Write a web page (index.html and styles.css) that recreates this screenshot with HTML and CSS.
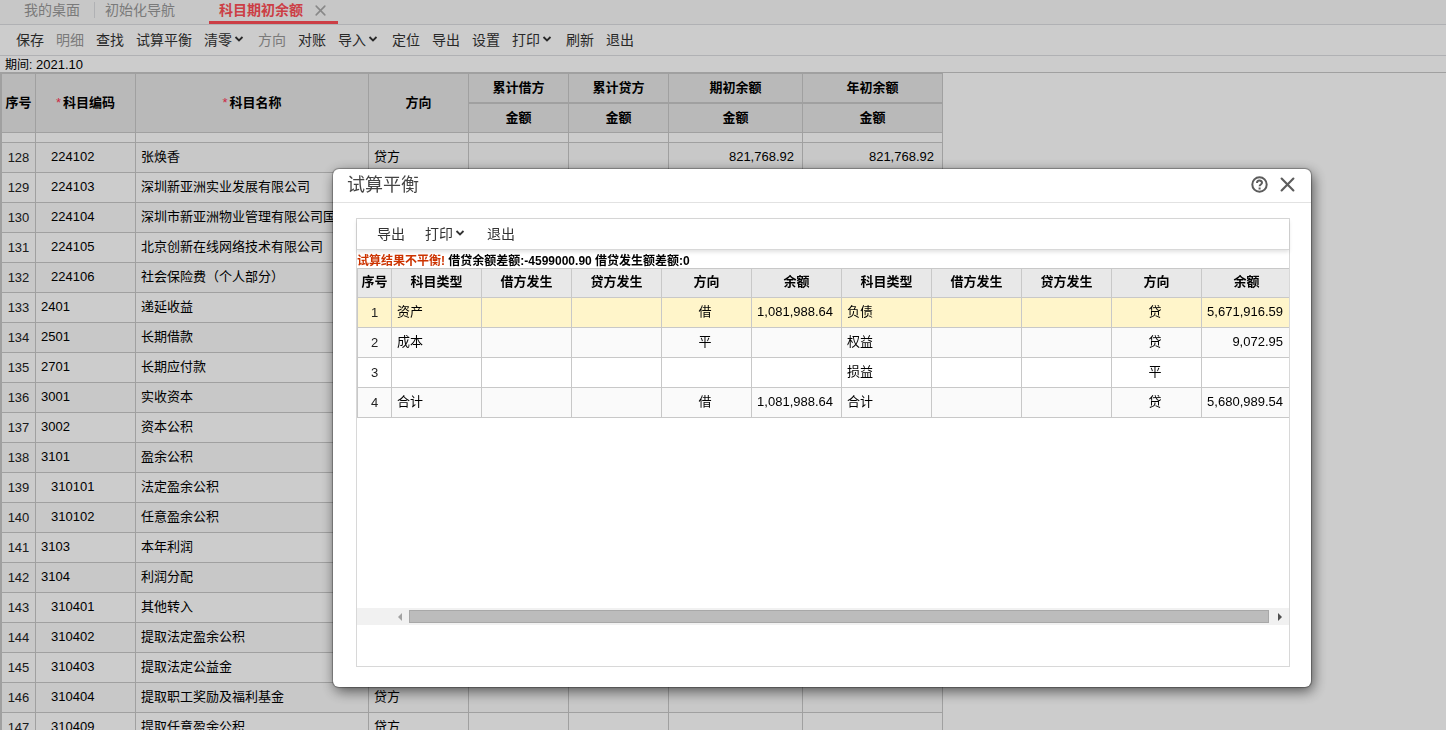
FILE: index.html
```html
<!DOCTYPE html>
<html lang="zh-CN">
<head>
    <meta charset="UTF-8">
    <meta name="viewport" content="width=device-width, initial-scale=1.0">
    <title>科目期初余额</title>
    <link rel="stylesheet" href="styles.css">
</head>
<body>

    <svg class="symbols" aria-hidden="true">
        <symbol id="chevron" viewBox="0 0 10 8"><path d="M1.5 2l3.5 3.5L8.5 2" fill="none" stroke="currentColor" stroke-width="1.8"/></symbol>
        <symbol id="cross" viewBox="0 0 14 14"><path d="M1.5 1.5l11 11M12.5 1.5l-11 11" fill="none" stroke="currentColor" stroke-linecap="round"/></symbol>
    </svg>

    <div class="page">
        <!-- 页签 -->
        <nav class="tabs">
            <a class="tab tab-home" href="#">我的桌面</a>
            <a class="tab tab-nav" href="#">初始化导航</a>
            <div class="tab active">
                <a href="#">科目期初余额</a>
                <button class="tab-close" aria-label="关闭页签"><svg><use href="#cross"/></svg></button>
            </div>
        </nav>

        <!-- 工具栏 -->
        <div class="toolbar">
            <button>保存</button>
            <button class="muted">明细</button>
            <button>查找</button>
            <button>试算平衡</button>
            <button>清零<svg class="chevron"><use href="#chevron"/></svg></button>
            <button class="muted">方向</button>
            <button>对账</button>
            <button>导入<svg class="chevron"><use href="#chevron"/></svg></button>
            <button>定位</button>
            <button>导出</button>
            <button>设置</button>
            <button>打印<svg class="chevron"><use href="#chevron"/></svg></button>
            <button>刷新</button>
            <button>退出</button>
        </div>

        <div class="period"><span>期间:</span> 2021.10</div>

        <div class="grid-area">
            <table class="grid main-grid">
                <colgroup>
                    <col class="c-no"><col class="c-code"><col class="c-name"><col class="c-dir">
                    <col class="c-sum"><col class="c-sum"><col class="c-begin"><col class="c-year">
                </colgroup>
                <thead>
                    <tr class="head-top">
                        <th rowspan="2">序号</th>
                        <th rowspan="2"><i>*</i>科目编码</th>
                        <th rowspan="2"><i>*</i>科目名称</th>
                        <th rowspan="2">方向</th>
                        <th class="group">累计借方</th>
                        <th class="group">累计贷方</th>
                        <th class="group">期初余额</th>
                        <th class="group">年初余额</th>
                    </tr>
                    <tr class="head-sub"><th>金额</th><th>金额</th><th>金额</th><th>金额</th></tr>
                </thead>
                <tbody>
                    <tr class="partial"><td></td><td></td><td></td><td></td><td></td><td></td><td></td><td></td></tr>
                    <tr><td>128</td><td class="sub">224102</td><td>张焕香</td><td>贷方</td><td></td><td></td><td class="num">821,768.92</td><td class="num">821,768.92</td></tr>
                    <tr><td>129</td><td class="sub">224103</td><td>深圳新亚洲实业发展有限公司</td><td></td><td></td><td></td><td></td><td></td></tr>
                    <tr><td>130</td><td class="sub">224104</td><td>深圳市新亚洲物业管理有限公司国</td><td></td><td></td><td></td><td></td><td></td></tr>
                    <tr><td>131</td><td class="sub">224105</td><td>北京创新在线网络技术有限公司</td><td></td><td></td><td></td><td></td><td></td></tr>
                    <tr><td>132</td><td class="sub">224106</td><td>社会保险费（个人部分）</td><td></td><td></td><td></td><td></td><td></td></tr>
                    <tr><td>133</td><td>2401</td><td>递延收益</td><td></td><td></td><td></td><td></td><td></td></tr>
                    <tr><td>134</td><td>2501</td><td>长期借款</td><td></td><td></td><td></td><td></td><td></td></tr>
                    <tr><td>135</td><td>2701</td><td>长期应付款</td><td></td><td></td><td></td><td></td><td></td></tr>
                    <tr><td>136</td><td>3001</td><td>实收资本</td><td></td><td></td><td></td><td></td><td></td></tr>
                    <tr><td>137</td><td>3002</td><td>资本公积</td><td></td><td></td><td></td><td></td><td></td></tr>
                    <tr><td>138</td><td>3101</td><td>盈余公积</td><td></td><td></td><td></td><td></td><td></td></tr>
                    <tr><td>139</td><td class="sub">310101</td><td>法定盈余公积</td><td></td><td></td><td></td><td></td><td></td></tr>
                    <tr><td>140</td><td class="sub">310102</td><td>任意盈余公积</td><td></td><td></td><td></td><td></td><td></td></tr>
                    <tr><td>141</td><td>3103</td><td>本年利润</td><td></td><td></td><td></td><td></td><td></td></tr>
                    <tr><td>142</td><td>3104</td><td>利润分配</td><td></td><td></td><td></td><td></td><td></td></tr>
                    <tr><td>143</td><td class="sub">310401</td><td>其他转入</td><td></td><td></td><td></td><td></td><td></td></tr>
                    <tr><td>144</td><td class="sub">310402</td><td>提取法定盈余公积</td><td></td><td></td><td></td><td></td><td></td></tr>
                    <tr><td>145</td><td class="sub">310403</td><td>提取法定公益金</td><td></td><td></td><td></td><td></td><td></td></tr>
                    <tr><td>146</td><td class="sub">310404</td><td>提取职工奖励及福利基金</td><td>贷方</td><td></td><td></td><td></td><td></td></tr>
                    <tr><td>147</td><td class="sub">310409</td><td>提取任意盈余公积</td><td>贷方</td><td></td><td></td><td></td><td></td></tr>
                </tbody>
            </table>
        </div>
    </div>

    <!-- 试算平衡弹窗 -->
    <div class="overlay">
        <div class="modal" role="dialog" aria-labelledby="modal-title">
            <div class="modal-header">
                <h2 id="modal-title">试算平衡</h2>
                <button class="icon-btn" aria-label="帮助">
                    <svg width="17" height="17" viewBox="0 0 17 17" fill="none" stroke="currentColor" stroke-width="2">
                        <circle cx="8.5" cy="8.5" r="7.2"/>
                        <path d="M6 7c0-3.2 5-3.2 5-.2 0 1.7-2.4 1.7-2.4 3.5M8.6 11.4v2"/>
                    </svg>
                </button>
                <button class="icon-btn modal-close" aria-label="关闭"><svg><use href="#cross"/></svg></button>
            </div>
            <div class="modal-box">
                <div class="toolbar modal-toolbar">
                    <button>导出</button>
                    <button>打印<svg class="chevron"><use href="#chevron"/></svg></button>
                    <button>退出</button>
                </div>
                <p class="result"><span>试算结果不平衡!</span> 借贷余额差额:-4599000.90 借贷发生额差额:0</p>
                <div class="balance-area">
                    <table class="grid balance-grid">
                        <thead>
                            <tr>
                                <th class="c-no">序号</th>
                                <th>科目类型</th><th>借方发生</th><th>贷方发生</th><th>方向</th><th>余额</th>
                                <th>科目类型</th><th>借方发生</th><th>贷方发生</th><th>方向</th><th>余额</th>
                            </tr>
                        </thead>
                        <tbody>
                            <tr class="selected"><td>1</td><td>资产</td><td></td><td></td><td class="mid">借</td><td class="num">1,081,988.64</td><td>负债</td><td></td><td></td><td class="mid">贷</td><td class="num">5,671,916.59</td></tr>
                            <tr><td>2</td><td>成本</td><td></td><td></td><td class="mid">平</td><td></td><td>权益</td><td></td><td></td><td class="mid">贷</td><td class="num">9,072.95</td></tr>
                            <tr><td>3</td><td></td><td></td><td></td><td></td><td></td><td>损益</td><td></td><td></td><td class="mid">平</td><td></td></tr>
                            <tr><td>4</td><td>合计</td><td></td><td></td><td class="mid">借</td><td class="num">1,081,988.64</td><td>合计</td><td></td><td></td><td class="mid">贷</td><td class="num">5,680,989.54</td></tr>
                        </tbody>
                    </table>
                </div>
                <div class="scrollbar">
                    <span class="arrow arrow-left"></span>
                    <span class="thumb"></span>
                    <span class="arrow arrow-right"></span>
                </div>
            </div>
        </div>
    </div>

</body>
</html>
```
FILE: styles.css
```css
* {
    box-sizing: border-box;
}
body {
    margin: 0;
    font-family: "Liberation Sans", "Noto Sans CJK SC", sans-serif;
    font-size: 13px;
    color: #000;
    background-color: #fff;
}
button {
    display: flex;
    align-items: center;
    padding: 0;
    border: none;
    background: none;
    font: inherit;
    color: inherit;
    cursor: pointer;
}
a {
    color: inherit;
    text-decoration: none;
}
.symbols {
    position: absolute;
    width: 0;
    height: 0;
}
.page {
    display: flex;
    flex-direction: column;
    height: 100vh;
    overflow: hidden;
}

/* 页签 */
.tabs {
    display: flex;
    flex: none;
    height: 25px;
    background-color: #f9f9f9;
    border-bottom: 1px solid #dcdee2;
    font-size: 14px;
    line-height: 20px;
    color: #999;
}
.tab-home {
    padding: 0 14px 0 24px;
}
.tab-nav {
    padding: 0 34px 0 10px;
    margin: 2px 0 6px;
    border-left: 1px solid #dcdee2;
    line-height: 16px;
}
.tab.active {
    display: flex;
    gap: 12px;
    height: 24px;
    padding: 0 12px 0 10px;
    border-bottom: 3px solid #ff4e57;
    color: #ff4e57;
    font-weight: bold;
}
.tab-close {
    height: 21px;
    color: #aaa;
}
.tab-close svg {
    width: 11px;
    height: 11px;
    stroke-width: 2;
}

/* 工具栏 */
.toolbar {
    display: flex;
    flex: none;
    gap: 12px;
    height: 31px;
    padding: 0 16px 2px;
    border-bottom: 1px solid #dcdee2;
    font-size: 14px;
    color: #333;
}
.toolbar .muted {
    color: #999;
}
.chevron {
    width: 10px;
    height: 8px;
    margin: 0 2px;
}
.period {
    flex: none;
    height: 16px;
    padding-left: 5px;
    line-height: 18px;
}
.period span {
    font-size: 12px;
}

/* 表格 */
.grid-area {
    flex: 1;
    overflow: hidden;
    border-top: 1px solid #c8c8c8;
}
.grid {
    table-layout: fixed;
    border-collapse: separate;
    border-spacing: 0;
}
.grid th,
.grid td {
    padding: 0 5px 2px;
    border-right: 1px solid #c8c8c8;
    border-bottom: 1px solid #c8c8c8;
    line-height: 20px;
    white-space: nowrap;
    overflow: hidden;
}
.grid th {
    padding: 0;
    background-color: #e8e8e8;
}
.grid td {
    height: 30px;
    text-align: left;
}
.grid td:first-child {
    padding: 0;
    text-align: center;
    color: #222;
}
.grid tbody tr:nth-child(even) {
    background-color: #fafafa;
}
.grid td.num {
    padding-right: 8px;
    text-align: right;
}
.grid td.mid {
    padding-right: 8px;
    text-align: center;
}
.main-grid {
    width: 943px;
    border-top: 1px solid #c8c8c8;
    border-left: 2px solid #c8c8c8;
}
.main-grid .head-top {
    height: 30px;
}
.main-grid .head-sub {
    height: 29px;
}
.main-grid .group {
    border-bottom-width: 2px;
}
.main-grid th i {
    margin-right: 2px;
    color: #ff3355;
    font-style: normal;
    font-weight: normal;
}
.main-grid .partial td {
    height: 10px;
    line-height: 0;
}
.main-grid td.sub {
    padding-left: 15px;
}
.c-no {
    width: 34px;
}
.c-code,
.c-dir,
.c-sum {
    width: 100px;
}
.c-name {
    width: 233px;
}
.c-begin {
    width: 134px;
}
.c-year {
    width: 140px;
}

/* 弹窗 */
.overlay {
    position: fixed;
    inset: 0;
    padding: 169px 135px 0 333px;
    background-color: rgba(0, 0, 0, 0.2);
}
.modal {
    padding-bottom: 20px;
    background-color: #fff;
    border-radius: 6px;
    box-shadow: 0 0 1px 1px rgba(0, 0, 0, 0.3), 2px 4px 14px rgba(0, 0, 0, 0.6);
}
.modal-header {
    display: flex;
    align-items: center;
    gap: 12px;
    height: 34px;
    padding: 0 16px 2px 14px;
    border-bottom: 1px solid #e2e2e2;
    color: #5c5c5c;
}
.modal-header h2 {
    flex: 1;
    margin: 0;
    color: #444;
    font-size: 18px;
    font-weight: normal;
    line-height: 24px;
}
.modal-close svg {
    width: 15px;
    height: 15px;
    stroke-width: 2;
}
.modal-box {
    margin: 15px 21px 0 23px;
    padding-bottom: 41px;
    border: 1px solid #d8d8d8;
}
.modal-toolbar {
    gap: 20px;
    padding: 0 20px 2px;
    border-bottom-color: #d8d8d8;
    box-shadow: 0 2px 4px rgba(0, 0, 0, 0.12);
}
.result {
    margin: 0;
    padding-top: 2px;
    height: 18px;
    font-size: 12px;
    font-weight: bold;
    line-height: 18px;
    white-space: nowrap;
}
.result span {
    color: #c30;
}
.balance-area {
    height: 340px;
    overflow: hidden;
}
.balance-grid {
    width: 935px;
    border-top: 1px solid #c8c8c8;
    border-left: 1px solid #c8c8c8;
}
.balance-grid th {
    height: 29px;
    padding-bottom: 2px;
}
.balance-grid .selected {
    background-color: #fff5ca;
}
.scrollbar {
    display: flex;
    align-items: center;
    height: 17px;
    padding: 0 7px 0 41px;
    background-color: #f1f1f1;
}
.thumb {
    flex: 1;
    height: 13px;
    margin: 0 9px 0 7px;
    background-color: #bcbcbc;
    border: 1px solid #a8a8a8;
}
.arrow {
    border: 4px solid transparent;
}
.arrow-left {
    border-left-width: 0;
    border-right-color: #a3a3a3;
}
.arrow-right {
    border-right-width: 0;
    border-left-color: #505050;
}
```
